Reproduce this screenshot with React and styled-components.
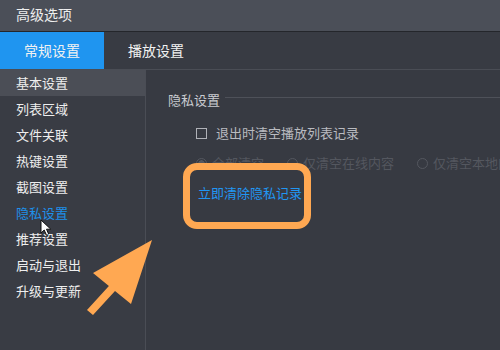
import React from "react";
import styled, { createGlobalStyle } from "styled-components";

const GlobalStyle = createGlobalStyle`
    html, body {
        margin: 0;
        padding: 0;
        background: #373a42;
    }
    * {
        box-sizing: border-box;
    }
`;

const menu = ["基本设置", "列表区域", "文件关联", "热键设置", "截图设置", "隐私设置", "推荐设置", "启动与退出", "升级与更新"];

function Cursor() {
    return (
        <CursorIcon width="14" height="18" viewBox="0 0 14 18">
            <path d="M1 1 L1 14 L4.2 11 L6.6 16.4 L8.8 15.4 L6.5 10.2 L10.8 10.2 Z" fill="#ffffff" stroke="#111" strokeWidth="1" strokeLinejoin="round" />
        </CursorIcon>
    );
}

function Pointer() {
    return (
        <Arrow width="70" height="82" viewBox="85 236 70 82">
            <polygon
                points="152,240 93,273 108.9,285.9 87,310 93,315 115,291.1 131,304"
                fill="#ffa852"
            />
        </Arrow>
    );
}

export default function App() {
    const [active, setActive] = React.useState("常规设置");
    const [item, setItem] = React.useState("隐私设置");

    return (
        <Window>
            <GlobalStyle />
            <TitleBar>高级选项</TitleBar>
            <Tabs>
                {["常规设置", "播放设置"].map(t => (
                    <Tab key={t} active={t === active} onClick={() => setActive(t)}>{t}</Tab>
                ))}
            </Tabs>
            <Body>
                <Sidebar>
                    {menu.map((m, i) => (
                        <MenuItem key={m} hover={i === 0} selected={m === item} onClick={() => setItem(m)}>
                            {m}
                            {m === "隐私设置" && <Cursor />}
                        </MenuItem>
                    ))}
                </Sidebar>
                <Panel>
                    <Legend>
                        <span>隐私设置</span>
                        <Rule />
                    </Legend>
                    <CheckRow>
                        <Box />
                        退出时清空播放列表记录
                    </CheckRow>
                    <RadioRow>
                        <Radio><Dot checked />全部清空</Radio>
                        <Radio><Dot />仅清空在线内容</Radio>
                        <Radio><Dot />仅清空本地内容</Radio>
                    </RadioRow>
                    <LinkWrap>
                        <ClearLink>立即清除隐私记录</ClearLink>
                        <Highlight />
                    </LinkWrap>
                </Panel>
            </Body>
            <Pointer />
        </Window>
    );
}

const Window = styled.div`
    position: relative;
    width: 500px;
    height: 350px;
    overflow: hidden;
    display: flex;
    flex-direction: column;
    background: #373a42;
    font: 13px/18px "Noto Sans CJK SC", "Noto Sans", sans-serif;
    color: #e8e8ea;
`

const TitleBar = styled.div`
    height: 32px;
    flex-shrink: 0;
    padding: 0 16px;
    line-height: 28px;
    font-size: 14px;
    background: #4b4f58;
    border-bottom: 1px solid #24262b;
    color: #eeeeee;
`

const Tabs = styled.div`
    display: flex;
    height: 38px;
    flex-shrink: 0;
    background: #383b43;
    border-bottom: 1px solid #4a4d55;
`

const Tab = styled.div`
    width: 104px;
    font-size: 14px;
    line-height: 37px;
    text-align: center;
    color: #f2f2f2;
    background: ${props => props.active ? '#1f95f0' : 'transparent'};
    cursor: pointer;
`

const Body = styled.div`
    display: flex;
    flex: 1;
`

const Sidebar = styled.div`
    width: 146px;
    flex-shrink: 0;
    border-right: 1px solid #4a4d55;
    background: #393c44;
`

const MenuItem = styled.div`
    position: relative;
    height: 26px;
    padding-left: 16px;
    line-height: 26px;
    background: ${props => props.hover ? '#4b4e56' : 'transparent'};
    color: ${props => props.selected ? '#1e90ea' : '#eeeeee'};
    cursor: pointer;
`

const CursorIcon = styled.svg`
    position: absolute;
    left: 40px;
    top: 19px;
`

const Panel = styled.div`
    flex: 1;
    padding: 20px 0 0 22px;
    background: #373a42;
`

const Legend = styled.div`
    display: flex;
    align-items: center;
    height: 18px;
    color: #c9cbd0;
    span {
        margin-top: 1px;
    }
`

const Rule = styled.div`
    flex: 1;
    height: 1px;
    margin: -3px 0 0 5px;
    background: #4e5159;
`

const CheckRow = styled.div`
    display: flex;
    align-items: center;
    height: 18px;
    margin: 16px 0 0 28px;
    color: #b9bbc0;
`

const Box = styled.span`
    width: 11px;
    height: 11px;
    margin-right: 9px;
    border: 1px solid #b0b2b8;
`

const RadioRow = styled.div`
    display: flex;
    height: 18px;
    margin: 12px 0 0 28px;
    white-space: nowrap;
    color: #54575f;
`

const Radio = styled.span`
    display: flex;
    align-items: center;
    margin-right: 23px;
`

const Dot = styled.span`
    width: 11px;
    height: 11px;
    margin-right: 5px;
    border-radius: 50%;
    border: 1px solid #54575f;
    background: ${props => props.checked ? 'radial-gradient(circle, #54575f 0 3px, transparent 3.5px)' : 'transparent'};
`

const LinkWrap = styled.div`
    position: relative;
    width: 104px;
    margin: 12px 0 0 30px;
`

const ClearLink = styled.a`
    display: block;
    height: 18px;
    color: #2196f3;
    cursor: pointer;
`

const Highlight = styled.div`
    position: absolute;
    left: -15px;
    top: -21px;
    width: 128px;
    height: 66px;
    border: 7px solid #ffa852;
    border-radius: 14px;
    pointer-events: none;
`

const Arrow = styled.svg`
    position: absolute;
    left: 85px;
    top: 236px;
    pointer-events: none;
`
